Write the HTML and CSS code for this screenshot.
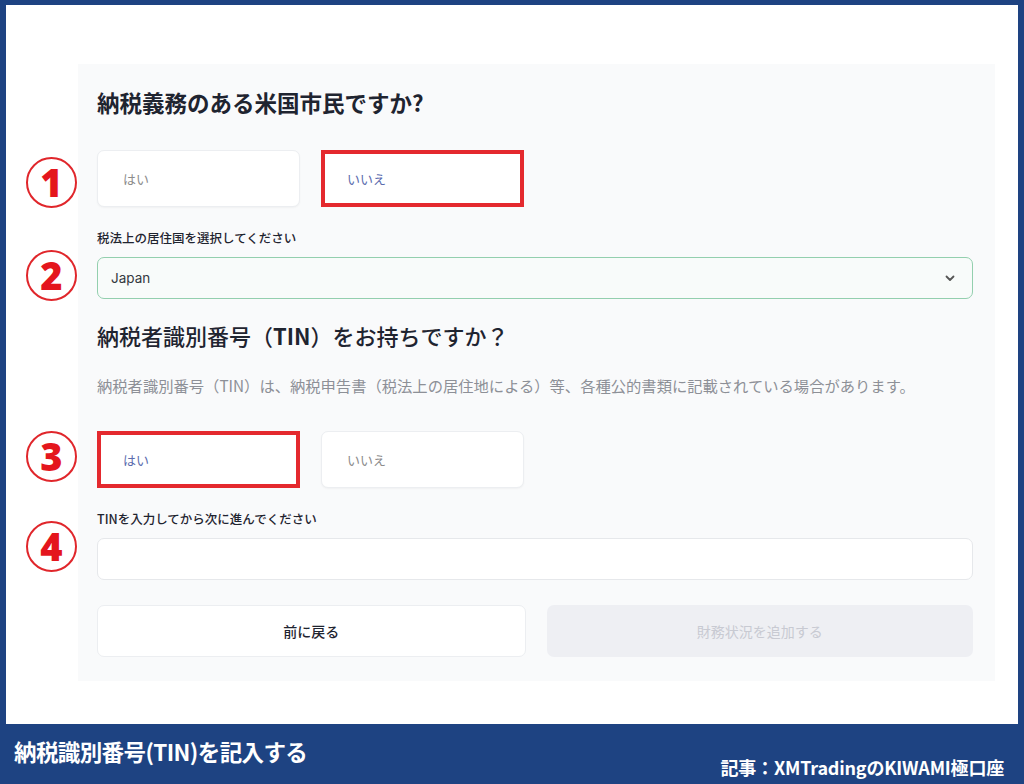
FILE: index.html
```html
<!DOCTYPE html>
<html lang="ja">
<head>
<meta charset="utf-8">
<title>納税識別番号(TIN)を記入する</title>
<link rel="stylesheet" href="styles.css">
</head>
<body>
<div class="page">
  <div class="canvas">
    <span class="num n1">1</span>
    <span class="num n2">2</span>
    <span class="num n3">3</span>
    <span class="num n4">4</span>
    <div class="card">
      <h1 class="title">納税義務のある米国市民ですか?</h1>
      <div class="options row1">
        <div class="opt">はい</div>
        <div class="opt marked">いいえ</div>
      </div>
      <div class="label l1">税法上の居住国を選択してください</div>
      <div class="select">
        <span>Japan</span>
        <svg class="chev" width="10" height="7" viewBox="0 0 10 7"><path d="M1.5 1.5 L5 5 L8.5 1.5" fill="none" stroke="#555" stroke-width="1.8" stroke-linecap="round" stroke-linejoin="round"/></svg>
      </div>
      <h2 class="title2">納税者識別番号（<b>TIN</b>）をお持ちですか？</h2>
      <p class="desc">納税者識別番号（TIN）は、納税申告書（税法上の居住地による）等、各種公的書類に記載されている場合があります。</p>
      <div class="options row2">
        <div class="opt marked">はい</div>
        <div class="opt">いいえ</div>
      </div>
      <div class="label l2">TINを入力してから次に進んでください</div>
      <div class="input"></div>
      <div class="actions">
        <div class="btn back">前に戻る</div>
        <div class="btn next">財務状況を追加する</div>
      </div>
    </div>
  </div>
  <div class="footer">
    <div class="ftitle">納税識別番号(TIN)を記入する</div>
    <div class="fsrc">記事：XMTradingのKIWAMI極口座</div>
  </div>
</div>
</body>
</html>
```
FILE: styles.css
```css
* { box-sizing: border-box; }
html, body { margin: 0; padding: 0; }
body {
  font-family: Inter, "Noto Sans CJK JP", sans-serif;
  color: #1f2430;
}
.page {
  width: 1024px;
  height: 784px;
  background: #1e4382;
  padding: 5px 6px 0 6px;
  display: flex;
  flex-direction: column;
}
.canvas {
  flex: 0 0 719px;
  background: #ffffff;
  position: relative;
  padding: 59px 0 0 72px;
}
.num {
  position: absolute;
  left: 20px;
  width: 51px;
  height: 51px;
  border: 2px solid #e0262b;
  border-radius: 50%;
  color: #e4161d;
  font-family: "Noto Sans", "Noto Sans CJK JP", sans-serif;
  font-weight: 900;
  font-size: 38px;
  line-height: 46px;
  text-align: center;
}
.n1 { top: 152px; }
.n2 { top: 245px; }
.n3 { top: 426px; }
.n4 { top: 516px; }
.card {
  width: 917px;
  background: #f9fafb;
  padding: 24px 22px 24px 19px;
}
.title {
  margin: 0;
  font-size: 22.5px;
  line-height: 28px;
  font-weight: 700;
  font-family: "Noto Sans CJK JP", sans-serif;
  color: #1f2430;
}
.options {
  display: flex;
  gap: 21px;
}
.row1 { margin-top: 34px; }
.row2 { margin-top: 36px; }
.opt {
  width: 203px;
  height: 57px;
  background: #ffffff;
  border: 1px solid #eceef1;
  border-radius: 7px;
  box-shadow: 0 1px 2px rgba(0,0,0,0.04);
  font-family: "Noto Sans CJK JP", sans-serif;
  font-size: 13px;
  color: #8c8c8c;
  display: flex;
  align-items: center;
  padding-left: 25px;
}
.opt.marked {
  border: 4px solid #e4292e;
  border-radius: 0;
  box-shadow: none;
  color: #5b6cae;
  padding-left: 22px;
}
.label {
  font-family: "Noto Sans CJK JP", sans-serif;
  font-size: 12.5px;
  line-height: 18px;
  font-weight: 500;
  color: #1f2430;
}
.l1 { margin-top: 22px; }
.l2 { margin-top: 22px; }
.select {
  margin-top: 10px;
  height: 42px;
  border: 1px solid #93cfae;
  border-radius: 7px;
  background: #f8fbfa;
  display: flex;
  align-items: center;
  justify-content: space-between;
  padding: 0 17px 0 13px;
  font-size: 13.5px;
  color: #333840;
}
.title2 {
  margin: 21px 0 0 0;
  font-family: "Noto Sans CJK JP", sans-serif;
  font-size: 22px;
  line-height: 30px;
  font-weight: 500;
  color: #1f2430;
}
.title2 b { font-weight: 700; }
.desc {
  margin: 25px 0 0 0;
  font-family: "Noto Sans CJK JP", sans-serif;
  font-size: 15.3px;
  line-height: 20px;
  color: #8d9097;
  letter-spacing: 0;
}
.input {
  margin-top: 10px;
  height: 42px;
  background: #ffffff;
  border: 1px solid #e6e8eb;
  border-radius: 7px;
}
.actions {
  margin-top: 25px;
  display: flex;
  gap: 21px;
}
.btn {
  flex: 1;
  height: 52px;
  border-radius: 7px;
  display: flex;
  align-items: center;
  justify-content: center;
  font-family: "Noto Sans CJK JP", sans-serif;
  font-size: 14px;
}
.back {
  background: #ffffff;
  border: 1px solid #eceef1;
  color: #1f2430;
  font-weight: 500;
}
.next {
  background: #eeeff3;
  color: #c8cad2;
}
.footer {
  flex: 1;
  display: flex;
  justify-content: space-between;
  padding: 0 14px 0 8px;
  color: #ffffff;
  font-family: "Noto Sans CJK JP", sans-serif;
  font-weight: 700;
}
.ftitle {
  padding-top: 13px;
  font-size: 22.5px;
  line-height: 28px;
  letter-spacing: -0.6px;
}
.fsrc {
  padding-top: 31px;
  font-size: 18px;
  line-height: 24px;
  letter-spacing: -0.2px;
}
```
